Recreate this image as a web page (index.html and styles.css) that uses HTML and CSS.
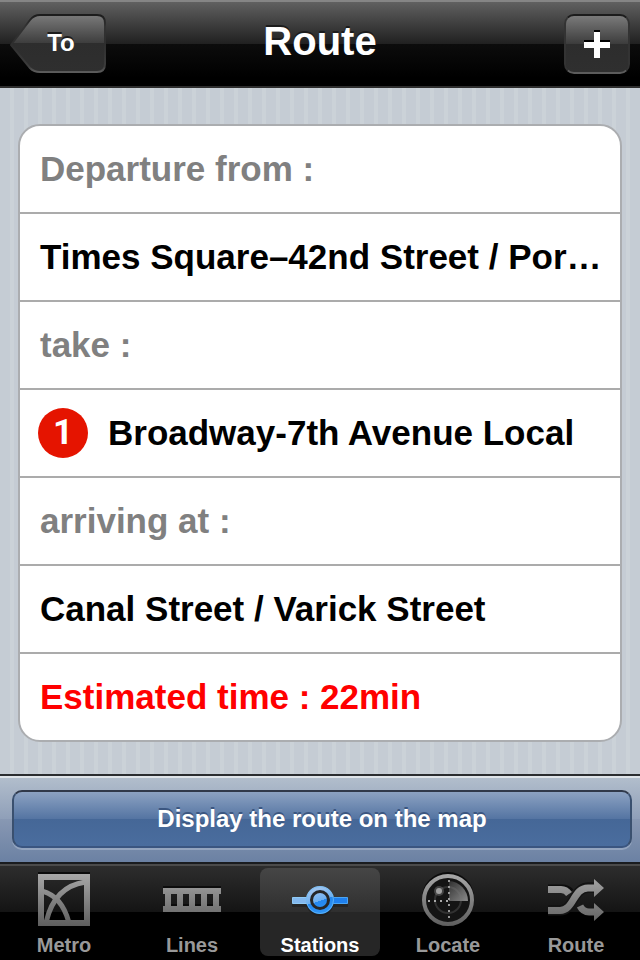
FILE: index.html
```html
<!DOCTYPE html>
<html lang="en">
<head>
  <meta charset="UTF-8">
  <meta name="viewport" content="width=device-width, initial-scale=1">
  <title>Route</title>
  <link rel="stylesheet" href="styles.css">
</head>
<body>

  <!-- Navigation bar -->
  <header class="navbar">
    <button type="button" class="back">
      <svg class="back-shape" viewBox="0 0 96 60" aria-hidden="true">
        <defs>
          <linearGradient id="backFill" x1="0" y1="0" x2="0" y2="1">
            <stop offset="0" stop-color="#7a7a7a"/>
            <stop offset="0.5" stop-color="#3c3c3c"/>
            <stop offset="0.5" stop-color="#2d2d2d"/>
            <stop offset="1" stop-color="#2f2f2f"/>
          </linearGradient>
          <linearGradient id="backEdge" x1="0" y1="0" x2="0" y2="1">
            <stop offset="0" stop-color="#1c1c1c"/>
            <stop offset="0.2" stop-color="#333"/>
            <stop offset="0.5" stop-color="#2e2e2e"/>
            <stop offset="0.9" stop-color="#3c3c3c"/>
            <stop offset="1" stop-color="#5c5c5c"/>
          </linearGradient>
        </defs>
        <path d="M1 31 L20 6 Q24 1 30 1 H87 Q95 1 95 9 V50 Q95 58 87 58 H30 Q24 58 20 54 Z" fill="url(#backFill)" stroke="url(#backEdge)" stroke-width="2"/>
      </svg>
      <span class="back-label">To</span>
    </button>
    <h1 class="title">Route</h1>
    <button type="button" class="add" aria-label="Add">
      <svg class="add-icon" viewBox="0 0 26 28" aria-hidden="true">
        <path d="M10 0h6v10h10v6H16v10h-6V16H0v-6h10z" fill="#000"/>
        <path d="M10 2h6v10h10v6H16v10h-6V18H0v-6h10z" fill="#fff"/>
      </svg>
    </button>
  </header>

  <!-- Route steps -->
  <main class="content">
    <ul class="steps">
      <li class="step hint">Departure from :</li>
      <li class="step">Times Square–42nd Street / Por…</li>
      <li class="step hint">take :</li>
      <li class="step line"><span class="bullet">1</span>Broadway-7th Avenue Local</li>
      <li class="step hint">arriving at :</li>
      <li class="step">Canal Street / Varick Street</li>
      <li class="step time">Estimated time : 22min</li>
    </ul>
  </main>

  <!-- Map toolbar -->
  <div class="toolbar">
    <button type="button" class="map-button">Display the route on the map</button>
  </div>

  <!-- Tab bar -->
  <nav class="tabs">
    <a class="tab" href="#metro">
      <svg class="tab-icon" viewBox="0 0 60 60" aria-hidden="true">
        <defs>
          <linearGradient id="grey" gradientUnits="userSpaceOnUse" x1="0" y1="4" x2="0" y2="56">
            <stop offset="0" stop-color="#a8a8a8"/>
            <stop offset="1" stop-color="#5e5e5e"/>
          </linearGradient>
          <clipPath id="metroClip"><rect x="9" y="9" width="42" height="42"/></clipPath>
        </defs>
        <rect x="4" y="2" width="52" height="3" fill="#0c0c0c"/>
        <path d="M4 4h52v52H4z M10 10v40h40V10z" fill="url(#grey)" fill-rule="evenodd"/>
        <g clip-path="url(#metroClip)" fill="none" stroke="url(#grey)" stroke-width="5">
          <path d="M12 53 C17 30 29 15 52 12"/>
          <path d="M8 21 C23 25 31 37 35 53"/>
        </g>
      </svg>
      <span class="tab-label">Metro</span>
    </a>
    <a class="tab" href="#lines">
      <svg class="tab-icon" viewBox="0 0 60 60" aria-hidden="true">
        <path d="M1 16h58v3H1z M9 34h6v2H9z M21 34h6v2h-6z M33 34h6v2h-6z M45 34h6v2h-6z" fill="#0c0c0c"/>
        <path d="M1 18h58v6h-2v12h2v6H1v-6h2V24H1z M9 24v12h6V24z M21 24v12h6V24z M33 24v12h6V24z M45 24v12h6V24z" fill="url(#grey)" fill-rule="evenodd"/>
      </svg>
      <span class="tab-label">Lines</span>
    </a>
    <a class="tab selected" href="#stations" aria-current="page">
      <svg class="tab-icon" viewBox="0 0 60 60" aria-hidden="true">
        <defs>
          <linearGradient id="blue" gradientUnits="userSpaceOnUse" x1="26" y1="20" x2="33" y2="42">
            <stop offset="0" stop-color="#9cc3ef"/>
            <stop offset="0.5" stop-color="#6aaef0"/>
            <stop offset="0.5" stop-color="#2487ee"/>
            <stop offset="1" stop-color="#2e93f5"/>
          </linearGradient>
        </defs>
        <path d="M2 30h56v7H2z" fill="#1c1c1c" opacity="0.6"/>
        <circle cx="30" cy="32" r="14" fill="#1c1c1c" opacity="0.6"/>
        <path d="M2.500 27.500h16v6h-16z" fill="#83b8ee" stroke="#8fcaf5"/>
        <path d="M41.500 27.500h16v6h-16z" fill="#1f80ee" stroke="#4aa5f4"/>
        <circle cx="30" cy="30" r="12" fill="#262626" stroke="url(#blue)" stroke-width="4"/>
        <circle cx="30" cy="30" r="13.500" fill="none" stroke="#6cbcf5" opacity="0.7"/>
        <circle cx="30" cy="30" r="7" fill="url(#blue)"/>
      </svg>
      <span class="tab-label">Stations</span>
    </a>
    <a class="tab" href="#locate">
      <svg class="tab-icon" viewBox="0 0 60 60" aria-hidden="true">
        <defs>
          <linearGradient id="sweep" x1="0" y1="0" x2="1" y2="1">
            <stop offset="0" stop-color="#303030"/>
            <stop offset="1" stop-color="#8a8a8a"/>
          </linearGradient>
        </defs>
        <circle cx="30" cy="28" r="24" fill="none" stroke="#0c0c0c" stroke-width="4"/>
        <circle cx="30" cy="30" r="24" fill="#141414" stroke="url(#grey)" stroke-width="4"/>
        <path d="M31 31V11A20 20 0 0 1 50 31z" fill="url(#sweep)"/>
        <circle cx="30" cy="30" r="13" fill="none" stroke="#777" stroke-width="2" opacity="0.3"/>
        <path d="M31 10v42" stroke="#999" stroke-width="2" stroke-dasharray="2 4"/>
        <path d="M10 31h20" stroke="#aaa" stroke-width="2" stroke-dasharray="2 4"/>
        <circle cx="21" cy="21" r="5" fill="#888" opacity="0.4"/>
        <circle cx="21" cy="21" r="3" fill="#a0a0a0"/>
      </svg>
      <span class="tab-label">Locate</span>
    </a>
    <a class="tab" href="#route">
      <svg class="tab-icon" viewBox="0 0 60 60" aria-hidden="true">
        <g fill="none" stroke="#0c0c0c" stroke-width="7">
          <path d="M2 18H16Q21 18 25 22"/>
          <path d="M2 39H14C28 39 27 16 42 16H48"/>
        </g>
        <g fill="none" stroke="url(#grey)" stroke-width="7">
          <path d="M2 19.500H15Q20 19.500 23 24"/>
          <path d="M34 36Q37 42 43 42H49"/>
        </g>
        <path d="M2 40.500H14C28 40.500 27 18 42 18H49" fill="none" stroke="#141414" stroke-width="10"/>
        <path d="M2 40.500H14C28 40.500 27 18 42 18H49" fill="none" stroke="url(#grey)" stroke-width="7"/>
        <path d="M48 9l10 9-10 9z M48 33l10 9-10 9z" fill="url(#grey)"/>
      </svg>
      <span class="tab-label">Route</span>
    </a>
  </nav>

</body>
</html>
```
FILE: styles.css
```css
* {
  margin: 0;
  padding: 0;
  box-sizing: border-box;
}

body {
  display: flex;
  flex-direction: column;
  min-height: 100vh;
  font-family: "Liberation Sans", Arial, sans-serif;
  font-weight: bold;
  background: #c5ccd4;
}

button {
  font: inherit;
  color: #fff;
  border: 0;
  cursor: pointer;
}

/* Navigation bar */
.navbar {
  display: grid;
  grid-template-columns: 96px 1fr 96px;
  align-items: center;
  height: 88px;
  padding: 0 10px;
  background: linear-gradient(#606060 0, #202020 50%, #0c0c0c 50%, #000 90%);
  border-top: 2px solid #858585;
  border-bottom: 2px solid #2e2e2e;
}

.back {
  display: grid;
  place-items: center;
  width: 96px;
  height: 60px;
  background: none;
}

.back-shape,
.back-label {
  grid-area: 1 / 1;
}

.back-shape {
  width: 96px;
  height: 60px;
}

.back-label {
  padding: 0 0 2px 6px;
  font-size: 24px;
  line-height: 28px;
  text-shadow: 0 -2px 0 #1c1c1c;
}

.title {
  padding-bottom: 6px;
  font-size: 40px;
  line-height: 48px;
  text-align: center;
  color: #fff;
  text-shadow: 0 -2px 0 #1c1c1c;
}

.add {
  display: flex;
  align-items: center;
  justify-content: center;
  justify-self: end;
  width: 66px;
  height: 60px;
  border: 2px solid #333;
  border-top-color: #1c1c1c;
  border-bottom-color: #5c5c5c;
  border-radius: 10px;
  background: linear-gradient(#7a7a7a 0, #3c3c3c 50%, #2d2d2d 50%, #2f2f2f 100%);
}

.add-icon {
  width: 26px;
  height: 28px;
}

/* Route steps */
.content {
  flex: 1;
  padding: 36px 18px 32px;
  background: repeating-linear-gradient(90deg, #c5ccd4 0, #c5ccd4 10px, #cbd2d8 10px, #cbd2d8 14px);
}

.steps {
  list-style: none;
  background: #fff;
  border: 2px solid #abadb0;
  border-radius: 22px;
}

.step {
  display: flex;
  align-items: center;
  height: 88px;
  padding: 0 16px 0 20px;
  font-size: 35px;
  line-height: 40px;
  white-space: nowrap;
  color: #000;
  border-bottom: 2px solid #ababab;
}

.step:last-child {
  height: 86px;
  border-bottom: 0;
}

.hint {
  color: #808080;
}

.time {
  color: #f00;
}

.line {
  gap: 20px;
  padding-left: 18px;
}

.bullet {
  flex: none;
  width: 50px;
  height: 50px;
  border-radius: 50%;
  font-family: Roboto, sans-serif;
  line-height: 50px;
  text-align: center;
  color: #fff;
  background: #e51400;
}

/* Map toolbar */
.toolbar {
  height: 88px;
  padding: 14px 8px 14px 12px;
  background: linear-gradient(#b3bfcd 0, #8f9fb8 50%, #8898b3 50%, #6b81a3 100%);
  border-top: 2px solid #2b2d30;
  box-shadow: inset 0 2px 0 #dfe4e9;
}

.map-button {
  width: 100%;
  height: 58px;
  font-size: 24px;
  line-height: 28px;
  text-shadow: 0 -2px 0 #3b5680;
  border: 2px solid #3a506f;
  border-top-color: #30394a;
  border-bottom-color: #3a5580;
  border-radius: 10px;
  background: linear-gradient(#8ca2c2 0, #5474a2 50%, #456797 50%, #4a6d9e 100%);
  box-shadow: 0 2px 0 #94a5bf;
}

/* Tab bar */
.tabs {
  display: grid;
  grid-template-columns: repeat(5, 1fr);
  height: 98px;
  padding-top: 4px;
  background: linear-gradient(#2e2e2e 0, #141414 48px, #000 48px);
  border-top: 2px solid #1a1c1f;
  box-shadow: inset 0 2px 0 #4b4b4b;
}

.tab {
  display: flex;
  flex-direction: column;
  align-items: center;
  justify-self: center;
  width: 120px;
  height: 88px;
  padding-top: 2px;
  color: #999;
  text-decoration: none;
  border-radius: 8px;
}

.tab-icon {
  flex: none;
  width: 60px;
  height: 60px;
}

.tab-label {
  padding-top: 3px;
  font-size: 20px;
  line-height: 24px;
}

.selected {
  color: #fff;
  background: linear-gradient(#464646 0, #2f2f2f 50%, #262626 50%, #262626 100%);
}
```
